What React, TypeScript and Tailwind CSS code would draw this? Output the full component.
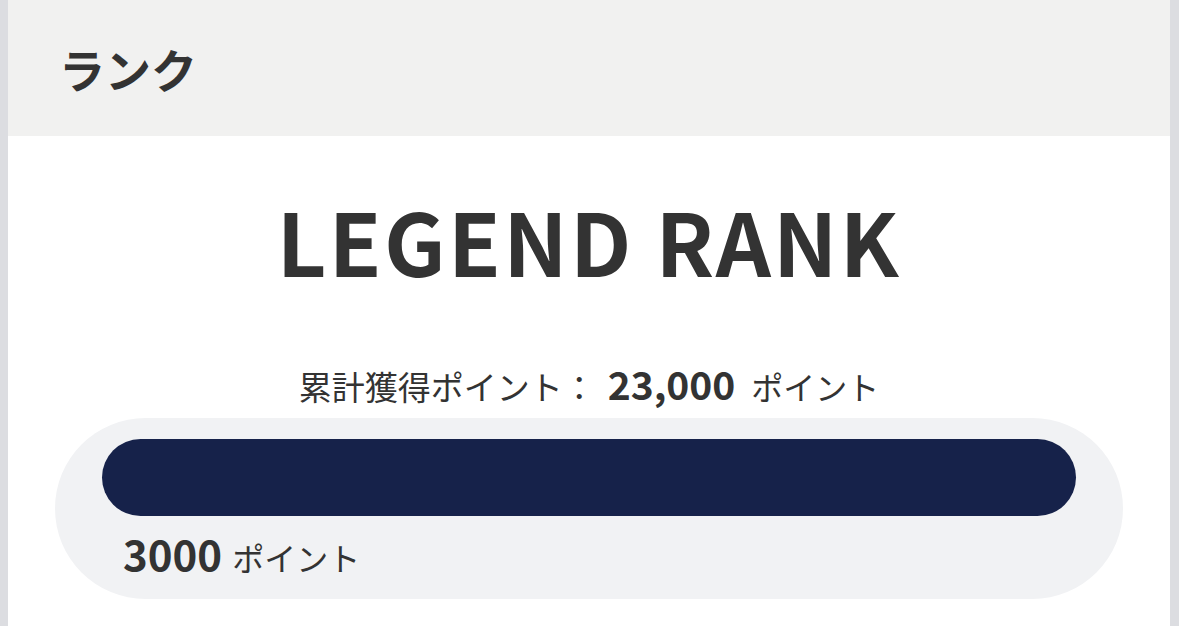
export default function App() {
  return (
    <div
      className="h-[626px] w-[1179px] overflow-hidden bg-[#dcdde1] pl-[8px] pr-[9px] text-[#333333]"
      style={{ fontFamily: '"Noto Sans CJK JP", "Noto Sans", sans-serif' }}
    >
      <div className="flex h-full flex-col bg-white">
        <div className="flex h-[136px] items-center bg-[#f1f1f0] pl-[51px]">
          <h2 className="text-[46px] font-bold leading-none">ランク</h2>
        </div>
        <div className="flex flex-col items-center pt-[61px]">
          <div className="text-[86px] font-bold leading-none tracking-[2.3px]">LEGEND RANK</div>
          <div className="mt-[81px] flex items-baseline text-[33px] leading-none">
            <span>累計獲得ポイント：</span>
            <span className="ml-[12px] mr-[16px] text-[39px] font-bold">23,000</span>
            <span className="text-[32px]">ポイント</span>
          </div>
        </div>
        <div className="mx-[47px] mt-[15px] rounded-full bg-[#f1f2f4] px-[47px] pb-[25px] pt-[21px]">
          <div className="h-[77px] rounded-full bg-[#16224a]" />
          <div className="mt-[16px] flex items-baseline pl-[21px] leading-none">
            <span className="text-[42px] font-bold">3000</span>
            <span className="ml-[10px] text-[32px]">ポイント</span>
          </div>
        </div>
      </div>
    </div>
  );
}
